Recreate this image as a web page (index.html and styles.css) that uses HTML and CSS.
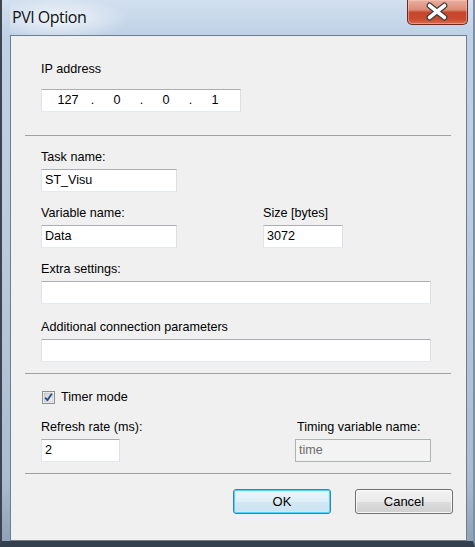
FILE: index.html
```html
<!DOCTYPE html>
<html>
<head>
<meta charset="utf-8">
<title>PVI Option</title>
<link rel="stylesheet" href="styles.css">
</head>
<body>
<div class="window">
  <div class="titlebar">
    <span class="title">PVI Option</span>
    <div class="close-btn">
      <svg width="61" height="25" viewBox="0 0 61 25">
        <path d="M23 6.5 L38 18.5 M38 6.5 L23 18.5" stroke="#3d3d3d" stroke-width="6.2" stroke-linecap="round"/>
        <path d="M23 6.5 L38 18.5 M38 6.5 L23 18.5" stroke="#ffffff" stroke-width="3.8" stroke-linecap="round"/>
      </svg>
    </div>
  </div>
  <div class="client">
    <div class="group group-ip">
      <div class="label">IP address</div>
      <div class="ipbox">
        <span class="octet">127</span><span class="dot">.</span><span class="octet">0</span><span class="dot">.</span><span class="octet">0</span><span class="dot">.</span><span class="octet">1</span>
      </div>
    </div>
    <div class="sep sep-first"></div>
    <div class="group group-task">
      <div class="label">Task name:</div>
      <div class="input w-136">ST_Visu</div>
    </div>
    <div class="row row-var">
      <div class="group">
        <div class="label">Variable name:</div>
        <div class="input w-136">Data</div>
      </div>
      <div class="group">
        <div class="label">Size [bytes]</div>
        <div class="input w-80">3072</div>
      </div>
    </div>
    <div class="group group-extra">
      <div class="label">Extra settings:</div>
      <div class="input w-390"></div>
    </div>
    <div class="group group-additional">
      <div class="label">Additional connection parameters</div>
      <div class="input w-390"></div>
    </div>
    <div class="sep sep-mid"></div>
    <div class="check-row">
      <span class="checkbox">
        <svg width="13" height="13" viewBox="0 0 13 13">
          <defs>
            <linearGradient id="cbg" x1="0" y1="0" x2="1" y2="1">
              <stop offset="0" stop-color="#cbcfd5"/>
              <stop offset="1" stop-color="#f6f6f6"/>
            </linearGradient>
          </defs>
          <rect x="0.5" y="0.5" width="12" height="12" fill="#ffffff" stroke="#8e8f8f"/>
          <rect x="2" y="2" width="9" height="9" fill="url(#cbg)" stroke="#aeb3b9" stroke-width="0.6"/>
          <path d="M3.2 6.6 L5.4 9.2 L9.8 2.8" fill="none" stroke="#2c4e89" stroke-width="1.9" stroke-linejoin="round"/>
        </svg>
      </span>
      <span class="check-label">Timer mode</span>
    </div>
    <div class="row row-timer">
      <div class="group">
        <div class="label">Refresh rate (ms):</div>
        <div class="input w-79">2</div>
      </div>
      <div class="group">
        <div class="label label-timing">Timing variable name:</div>
        <div class="input input-disabled w-136">time</div>
      </div>
    </div>
    <div class="sep sep-last"></div>
    <div class="buttons">
      <div class="button button-default">OK</div>
      <div class="button">Cancel</div>
    </div>
  </div>
</div>
</body>
</html>
```
FILE: styles.css
```css
html, body {
  margin: 0;
  padding: 0;
  background: #2f3a46;
}

.window {
  width: 475px;
  height: 547px;
  box-sizing: border-box;
  display: flex;
  flex-direction: column;
  padding: 0 6px 0 8px;
  border-left: 2px solid #3e454e;
  border-right: 2px solid #7e8fa3;
  border-bottom: 6px solid #34404d;
  background: linear-gradient(to bottom, #d2e0ef 0px, #bfd1e6 35px, #bccde0 200px, #aabccf 480px, #8fa2b6 541px);
}

.titlebar {
  height: 35px;
  flex: 0 0 35px;
  display: flex;
  justify-content: space-between;
  align-items: flex-start;
  background: radial-gradient(ellipse 72px 22px at 48px 19px, rgba(255,255,255,0.75), rgba(255,255,255,0) 100%);
}

.title {
  font-family: "Open Sans", "Liberation Sans", sans-serif;
  font-size: 16px;
  letter-spacing: -0.5px;
  color: #111;
  margin: 6px 0 0 2px;
  line-height: 22px;
}

.close-btn {
  width: 61px;
  height: 25px;
  box-sizing: border-box;
  margin-right: -1px;
  border: 1px solid #6a2a20;
  border-top: none;
  border-radius: 0 0 5px 5px;
  background: linear-gradient(to bottom, #e9ae9f 0%, #dc8c78 40%, #c8462c 52%, #c84a2e 78%, #dc6a4a 100%);
  box-shadow: inset 0 0 0 1px rgba(255, 210, 200, 0.45);
  display: flex;
  align-items: center;
  justify-content: center;
  overflow: hidden;
}

.close-btn svg {
  display: block;
  margin: -1px 0 0 -1px;
}

.client {
  flex: 1;
  border: 1px solid #6f7e8f;
  background: #f0f0f0;
  display: flex;
  flex-direction: column;
  padding-left: 30px;
  font-family: "Liberation Sans", Arial, sans-serif;
  font-size: 12.6px;
  color: #000;
}

.label {
  line-height: 15px;
  height: 15px;
  white-space: nowrap;
}

.group {
  display: flex;
  flex-direction: column;
}

.input {
  box-sizing: border-box;
  height: 23px;
  margin-top: 4px;
  background: #fff;
  border: 1px solid;
  border-color: #abadb3 #dbdfe6 #e3e9ef #e2e3ea;
  padding: 0 3px;
  line-height: 21px;
  white-space: nowrap;
}

.input-disabled {
  background: #f3f3f3;
  border-color: #adb2b5;
  color: #6d6d6d;
}

.w-136 { width: 136px; }
.w-80 { width: 80px; }
.w-79 { width: 79px; }
.w-390 { width: 390px; }

.group-ip {
  margin-top: 26px;
}

.ipbox {
  box-sizing: border-box;
  width: 200px;
  height: 23px;
  margin-top: 12px;
  background: #fff;
  border: 1px solid;
  border-color: #abadb3 #dbdfe6 #e3e9ef #e2e3ea;
  display: flex;
  padding-left: 6px;
  line-height: 21px;
}

.octet {
  width: 40px;
  text-align: center;
}

.dot {
  width: 9px;
  text-align: center;
}

.sep {
  height: 1px;
  width: 426px;
  margin-left: -16px;
  background: #a0a0a0;
  flex: 0 0 1px;
}

.sep-first { margin-top: 23px; }
.sep-mid { margin-top: 11px; }
.sep-last { margin-top: 11px; }

.group-task { margin-top: 14px; }

.row {
  display: flex;
  width: 390px;
  justify-content: space-between;
}

.row-var {
  margin-top: 14px;
  width: 302px;
}

.group-extra { margin-top: 14px; }
.group-additional { margin-top: 16px; }

.check-row {
  margin-top: 16px;
  display: flex;
  align-items: center;
  height: 15px;
  line-height: 15px;
}

.checkbox {
  width: 13px;
  height: 13px;
  margin-left: 1px;
  margin-right: 6px;
}

.checkbox svg {
  display: block;
}

.row-timer {
  margin-top: 15px;
}

.label-timing {
  padding-left: 2px;
}

.buttons {
  margin-top: 15px;
  display: flex;
  justify-content: flex-end;
  gap: 24px;
  margin-right: 13px;
}

.button {
  box-sizing: border-box;
  width: 98px;
  height: 25px;
  border: 1px solid #707070;
  border-radius: 3px;
  background: linear-gradient(to bottom, #f2f2f2 0%, #ebebeb 50%, #dddddd 51%, #cfcfcf 100%);
  box-shadow: inset 0 0 0 1px rgba(255,255,255,0.8);
  text-align: center;
  line-height: 23px;
  font-size: 13px;
}

.button-default {
  border-color: #3c7fb1;
  box-shadow: inset 0 0 0 1px #4ed3ff, inset 0 0 0 2px rgba(200, 240, 255, 0.6);
  background: linear-gradient(to bottom, #eaf6fd 0%, #e0eef7 50%, #d2e7f4 51%, #cde3f1 100%);
}
```
